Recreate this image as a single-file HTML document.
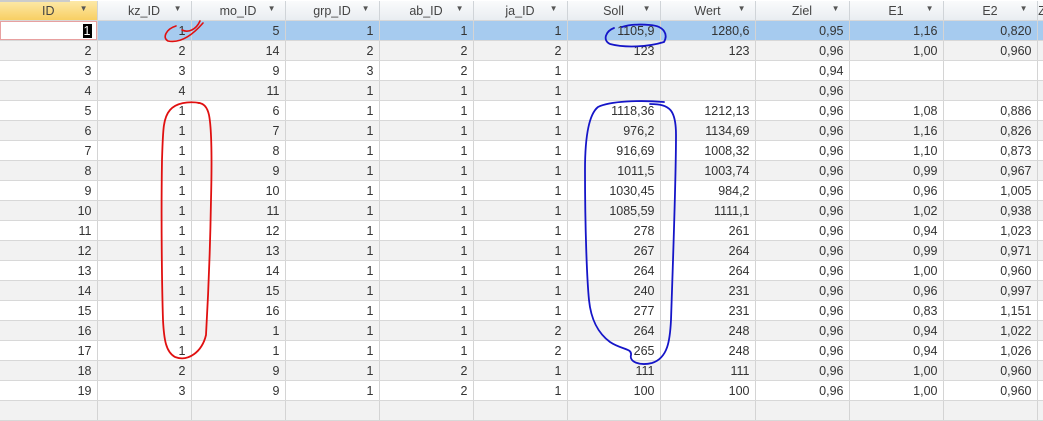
<!DOCTYPE html>
<html><head><style>
body{margin:0;width:1043px;height:406px;overflow:hidden;background:#fff;font-family:"Liberation Sans",sans-serif;font-size:12.5px;color:#333;position:relative}
table{border-collapse:collapse;table-layout:fixed;position:absolute;left:0;top:1px;width:1047px}
td,th{height:19px;padding:0 5px 0 0;border-right:1px solid #d4d4d4;border-bottom:1px solid #d8d8d8;text-align:right;white-space:nowrap;overflow:hidden}
th{height:19px;font-weight:normal;text-align:center;background:linear-gradient(#fafbfc,#e9edf1);color:#444;position:relative;padding:0;border-right:1px solid #d0d4d8}
th span{position:absolute;right:9px;top:3px;font-size:8px;color:#555}
th.id{background:linear-gradient(#fde9a8,#f8cf63)}
tr:nth-child(odd) td{background:#f2f2f2}
tr.sel td{background:#a6cbef}
tr.sel td.f{background:#fff;box-shadow:inset 0 0 0 1px #e8a0a0}
.cur{background:#000;color:#fff;padding:0 1px}
svg{position:absolute;left:0;top:0}
.top{position:absolute;left:0;top:0;width:70px;height:2px;background:#ccc}
</style></head><body>
<table>
<colgroup><col style="width:97px"><col style="width:94px"><col style="width:94px"><col style="width:94px"><col style="width:94px"><col style="width:94px"><col style="width:93px"><col style="width:95px"><col style="width:94px"><col style="width:94px"><col style="width:94px"><col style="width:10px"></colgroup>
<tr><th class="id">ID<span>▼</span></th><th>kz_ID<span>▼</span></th><th>mo_ID<span>▼</span></th><th>grp_ID<span>▼</span></th><th>ab_ID<span>▼</span></th><th>ja_ID<span>▼</span></th><th>Soll<span>▼</span></th><th>Wert<span>▼</span></th><th>Ziel<span>▼</span></th><th>E1<span>▼</span></th><th>E2<span>▼</span></th><th>Z</th></tr>
<tr class="sel"><td class="f"><span class="cur">1</span></td><td>1</td><td>5</td><td>1</td><td>1</td><td>1</td><td>1105,9</td><td>1280,6</td><td>0,95</td><td>1,16</td><td>0,820</td><td></td></tr>
<tr><td>2</td><td>2</td><td>14</td><td>2</td><td>2</td><td>2</td><td>123</td><td>123</td><td>0,96</td><td>1,00</td><td>0,960</td><td></td></tr>
<tr><td>3</td><td>3</td><td>9</td><td>3</td><td>2</td><td>1</td><td></td><td></td><td>0,94</td><td></td><td></td><td></td></tr>
<tr><td>4</td><td>4</td><td>11</td><td>1</td><td>1</td><td>1</td><td></td><td></td><td>0,96</td><td></td><td></td><td></td></tr>
<tr><td>5</td><td>1</td><td>6</td><td>1</td><td>1</td><td>1</td><td>1118,36</td><td>1212,13</td><td>0,96</td><td>1,08</td><td>0,886</td><td></td></tr>
<tr><td>6</td><td>1</td><td>7</td><td>1</td><td>1</td><td>1</td><td>976,2</td><td>1134,69</td><td>0,96</td><td>1,16</td><td>0,826</td><td></td></tr>
<tr><td>7</td><td>1</td><td>8</td><td>1</td><td>1</td><td>1</td><td>916,69</td><td>1008,32</td><td>0,96</td><td>1,10</td><td>0,873</td><td></td></tr>
<tr><td>8</td><td>1</td><td>9</td><td>1</td><td>1</td><td>1</td><td>1011,5</td><td>1003,74</td><td>0,96</td><td>0,99</td><td>0,967</td><td></td></tr>
<tr><td>9</td><td>1</td><td>10</td><td>1</td><td>1</td><td>1</td><td>1030,45</td><td>984,2</td><td>0,96</td><td>0,96</td><td>1,005</td><td></td></tr>
<tr><td>10</td><td>1</td><td>11</td><td>1</td><td>1</td><td>1</td><td>1085,59</td><td>1111,1</td><td>0,96</td><td>1,02</td><td>0,938</td><td></td></tr>
<tr><td>11</td><td>1</td><td>12</td><td>1</td><td>1</td><td>1</td><td>278</td><td>261</td><td>0,96</td><td>0,94</td><td>1,023</td><td></td></tr>
<tr><td>12</td><td>1</td><td>13</td><td>1</td><td>1</td><td>1</td><td>267</td><td>264</td><td>0,96</td><td>0,99</td><td>0,971</td><td></td></tr>
<tr><td>13</td><td>1</td><td>14</td><td>1</td><td>1</td><td>1</td><td>264</td><td>264</td><td>0,96</td><td>1,00</td><td>0,960</td><td></td></tr>
<tr><td>14</td><td>1</td><td>15</td><td>1</td><td>1</td><td>1</td><td>240</td><td>231</td><td>0,96</td><td>0,96</td><td>0,997</td><td></td></tr>
<tr><td>15</td><td>1</td><td>16</td><td>1</td><td>1</td><td>1</td><td>277</td><td>231</td><td>0,96</td><td>0,83</td><td>1,151</td><td></td></tr>
<tr><td>16</td><td>1</td><td>1</td><td>1</td><td>1</td><td>2</td><td>264</td><td>248</td><td>0,96</td><td>0,94</td><td>1,022</td><td></td></tr>
<tr><td>17</td><td>1</td><td>1</td><td>1</td><td>1</td><td>2</td><td>265</td><td>248</td><td>0,96</td><td>0,94</td><td>1,026</td><td></td></tr>
<tr><td>18</td><td>2</td><td>9</td><td>1</td><td>2</td><td>1</td><td>111</td><td>111</td><td>0,96</td><td>1,00</td><td>0,960</td><td></td></tr>
<tr><td>19</td><td>3</td><td>9</td><td>1</td><td>2</td><td>1</td><td>100</td><td>100</td><td>0,96</td><td>1,00</td><td>0,960</td><td></td></tr>
<tr><td></td><td></td><td></td><td></td><td></td><td></td><td></td><td></td><td></td><td></td><td></td><td></td></tr>
</table>
<div class="top"></div>
<svg width="1043" height="406" fill="none" stroke-linecap="round" stroke-linejoin="round">
<path d="M200,21 C196,30 188,33 182,30 M176,26 C166,29 162,38 168,41 C178,43 190,38 203,23" stroke="#e01010" stroke-width="1.6"/>
<path d="M200,103 C188,101 176,103 170,110 C163,118 163,130 162,160 C161,220 162,290 163,320 C164,340 166,352 175,357 C188,362 202,352 206,335 C208,300 210,260 211,200 C212,160 212,130 209,115 C207,106 203,103 198,103" stroke="#e01010" stroke-width="1.8"/>
<path d="M614,28 C606,31 602,40 610,44 C625,48 648,47 664,42 C668,35 665,26 650,25 C638,24 628,25 622,27" stroke="#1515c8" stroke-width="1.8"/>
<path d="M664,102 C640,100 610,101 598,107 C588,115 585,140 585,170 C585,230 587,280 589,300 C591,320 598,333 610,342 C622,350 632,348 631,355 C629,362 640,366 652,363 C668,358 670,340 671,320 C673,260 676,180 676,135 C676,110 670,104 650,104" stroke="#1515c8" stroke-width="1.8"/>
</svg>
</body></html>
